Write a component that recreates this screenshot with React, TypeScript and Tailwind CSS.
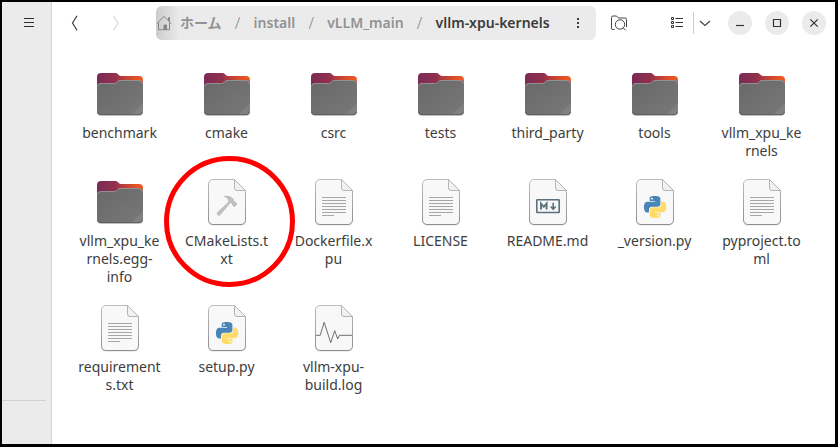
import React from 'react';

type Kind = 'folder' | 'text' | 'cmake' | 'markdown' | 'python' | 'log';

type Entry = {
  kind: Kind;
  // "\n" marks where a long name wraps
  name: string;
  marked?: boolean;
};

const entries: Entry[] = [
  { kind: 'folder', name: 'benchmark' },
  { kind: 'folder', name: 'cmake' },
  { kind: 'folder', name: 'csrc' },
  { kind: 'folder', name: 'tests' },
  { kind: 'folder', name: 'third_party' },
  { kind: 'folder', name: 'tools' },
  { kind: 'folder', name: 'vllm_xpu_ke\nrnels' },
  { kind: 'folder', name: 'vllm_xpu_ke\nrnels.egg-\ninfo' },
  { kind: 'cmake', name: 'CMakeLists.t\nxt', marked: true },
  { kind: 'text', name: 'Dockerfile.x\npu' },
  { kind: 'text', name: 'LICENSE' },
  { kind: 'markdown', name: 'README.md' },
  { kind: 'python', name: '_version.py' },
  { kind: 'text', name: 'pyproject.to\nml' },
  { kind: 'text', name: 'requirement\ns.txt' },
  { kind: 'python', name: 'setup.py' },
  { kind: 'log', name: 'vllm-xpu-\nbuild.log' },
];

const FolderIcon: React.FC = () => (
  <svg viewBox="0 0 48 48" className="h-12 w-12" aria-hidden="true">
    <defs>
      <linearGradient id="folder-back" x1="0" y1="0" x2="1" y2="0">
        <stop offset="0" stopColor="#7a2a56" />
        <stop offset="0.4" stopColor="#93304c" />
        <stop offset="0.55" stopColor="#b53c3c" />
        <stop offset="0.8" stopColor="#dd4f28" />
        <stop offset="1" stopColor="#f05a22" />
      </linearGradient>
      <linearGradient id="folder-front" x1="0" y1="0" x2="1" y2="1">
        <stop offset="0" stopColor="#686868" />
        <stop offset="1" stopColor="#787878" />
      </linearGradient>
    </defs>
    <rect x="1" y="14" width="46" height="32" rx="4" fill="#000" opacity="0.18" />
    <path d="M1 7a4 4 0 0 1 4-4h14.500c1 0 1.800.4 2.500 1.200l1 1c.6.500 1.200.8 2 .8h18a4 4 0 0 1 4 4v25H1z" fill="url(#folder-back)" />
    <path d="M1 17a4 4 0 0 1 4-4h13.500c.9 0 1.500-.3 2-.8l1.400-1.400c.5-.5 1.100-.8 2-.8H43a4 4 0 0 1 4 4v27a4 4 0 0 1-4 4H5a4 4 0 0 1-4-4z" fill="url(#folder-front)" />
    <path d="M1.500 16.500a3.500 3.500 0 0 1 3.500-3h13.500c1 0 1.800-.4 2.400-1l1.200-1.200c.5-.5 1-.8 1.900-.8H43a3.500 3.500 0 0 1 3.500 3" fill="none" stroke="#9a9a9a" strokeWidth="0.800" />
    <path d="M47 33v8a4 4 0 0 1-4 4h-8z" fill="#fff" opacity="0.08" />
    <path d="M1.500 42a3.500 3.500 0 0 0 3.500 2.700h38a3.500 3.500 0 0 0 3.500-2.700" fill="none" stroke="#555" strokeWidth="0.800" />
  </svg>
);

const Page: React.FC<{ children: React.ReactNode }> = ({ children }) => (
  <svg viewBox="0 0 48 48" className="h-12 w-12" aria-hidden="true">
    <defs>
      <linearGradient id="page-edge" x1="0" y1="0" x2="0" y2="1">
        <stop offset="0" stopColor="#bdbdbd" />
        <stop offset="1" stopColor="#8e8e8e" />
      </linearGradient>
    </defs>
    <path d="M5 12v31a4.500 4.500 0 0 0 4.500 4.500h29A4.500 4.500 0 0 0 43 43V15z" fill="#000" opacity="0.120" />
    <path d="M10 1.500h21.500l11 11V42a4.500 4.500 0 0 1-4.500 4.500H10A4.500 4.500 0 0 1 5.500 42V6A4.500 4.500 0 0 1 10 1.500z" fill="#f8f8f8" stroke="url(#page-edge)" />
    <path d="M31.500 1.500V10a2.500 2.500 0 0 0 2.500 2.500h8.500z" fill="#f1f1f1" stroke="#b5b5b5" />
    {children}
  </svg>
);

const TextGlyph: React.FC = () => (
  <path d="M12 19.500h24M12 22.500h24M12 25.500h24M12 28.500h24M12 31.500h24M12 34.500h24M12 37.500h12" stroke="#9c9c9c" strokeWidth="0.900" />
);

const HammerGlyph: React.FC = () => (
  <path
    d="M20.200 18.200c4-.9 7.200-.3 9.300 1.800l1.300 1.500.2 1.800 1.200.3 2.200 2.300-3 3.300-2.300-2.300-.2-1.300-1.700-.3-9.700 11.800c-.8.9-1.800.9-2.600.1l-.7-.8c-.7-.8-.6-1.700.3-2.400l11-10.300c-.5-2.800-2.200-4.500-5.300-5.500z"
    fill="#bfbfbf"
  />
);

const MarkdownGlyph: React.FC = () => (
  <g fill="none" stroke="#5b717c">
    <rect x="12.800" y="21.800" width="22.400" height="12.700" rx="0.500" strokeWidth="1.600" />
    <path d="M17 31.500v-6l2.800 3.300 2.800-3.300v6" strokeWidth="1.900" />
    <path d="M29.200 24.700v6M26.700 28.500l2.500 2.700 2.500-2.700" strokeWidth="1.600" />
  </g>
);

const PythonGlyph: React.FC = () => (
  <g transform="translate(13 18) scale(0.920)">
    <path
      fill="#4b85b6"
      d="M14.25.18l.9.2.73.26.59.3.45.32.34.34.25.34.16.33.1.3.04.26.02.2-.01.13V8.5l-.05.63-.13.55-.21.46-.26.38-.3.31-.33.25-.35.19-.35.14-.33.1-.3.07-.26.04-.21.02H8.77l-.69.05-.59.14-.5.22-.41.27-.33.32-.27.35-.2.36-.15.37-.1.35-.07.32-.04.27-.02.21v3.06H3.17l-.21-.03-.28-.07-.32-.12-.35-.18-.36-.26-.36-.36-.35-.46-.32-.59-.28-.73-.21-.88-.14-1.05-.05-1.23.06-1.22.16-1.04.24-.87.32-.71.36-.57.4-.44.42-.33.42-.24.4-.16.36-.1.32-.05.24-.01h.16l.06.01h8.16v-.83H6.18l-.01-2.75-.02-.37.05-.34.11-.31.17-.28.25-.26.31-.23.38-.2.44-.18.51-.15.58-.12.64-.1.71-.06.77-.04.84-.02 1.27.05zm-6.3 1.98l-.23.33-.08.41.08.41.23.34.33.22.41.09.41-.09.33-.22.23-.34.08-.41-.08-.41-.23-.33-.33-.22-.41-.09-.41.09z"
    />
    <path
      fill="#ffdc68"
      d="M21.1 6.11l.28.06.32.12.35.18.36.27.36.35.35.47.32.59.28.73.21.88.14 1.04.05 1.23-.06 1.23-.16 1.04-.24.86-.32.71-.36.57-.4.45-.42.33-.42.24-.4.16-.36.09-.32.05-.24.02-.16-.01h-8.22v.82h5.84l.01 2.76.02.36-.05.34-.11.31-.17.29-.25.25-.31.24-.38.2-.44.17-.51.15-.58.13-.64.09-.71.07-.77.04-.84.01-1.27-.04-1.07-.14-.9-.2-.73-.25-.59-.3-.45-.33-.34-.34-.25-.34-.16-.33-.1-.3-.04-.25-.02-.2.01-.13v-5.34l.05-.64.13-.54.21-.46.26-.38.3-.32.33-.24.35-.2.35-.14.33-.1.3-.06.26-.04.21-.02.13-.01h5.84l.69-.05.59-.14.5-.21.41-.28.33-.32.27-.35.2-.36.15-.36.1-.35.07-.32.04-.28.02-.21V6.07h2.09l.14.01zm-6.47 14.25l-.23.33-.08.41.08.41.23.33.33.23.41.08.41-.08.33-.23.23-.33.08-.41-.08-.41-.23-.33-.33-.23-.41-.08-.41.08z"
    />
  </g>
);

const LogGlyph: React.FC = () => (
  <path d="M6 31.300h4.200l4-13 6.500 20.400 4-12 3 8.300 1.600-3.700H42" fill="none" stroke="#6e6e6e" />
);

const EntryIcon: React.FC<{ kind: Kind }> = ({ kind }) => {
  if (kind === 'folder') return <FolderIcon />;
  return (
    <Page>
      {kind === 'text' && <TextGlyph />}
      {kind === 'cmake' && <HammerGlyph />}
      {kind === 'markdown' && <MarkdownGlyph />}
      {kind === 'python' && <PythonGlyph />}
      {kind === 'log' && <LogGlyph />}
    </Page>
  );
};

const Sidebar: React.FC = () => (
  <aside className="flex w-[50px] shrink-0 flex-col border-r border-[#d5d5d5] bg-[#ebebeb]">
    <button type="button" aria-label="Menu" className="mt-1 ml-2.5 flex h-[34px] w-[34px] items-center justify-center">
      <svg viewBox="0 0 16 16" className="h-4 w-4" aria-hidden="true">
        <path d="M3 3.500h10M3 7.500h10M3 11.500h10" stroke="#2e2e2e" />
      </svg>
    </button>
    <hr className="mt-auto mr-[5px] mb-[43px] border-[#cfcfcf]" />
  </aside>
);

const Slash: React.FC = () => (
  <span className="w-8 text-center text-base font-light text-[#8a8a8a]">/</span>
);

const PathBar: React.FC = () => (
  <nav
    aria-label="Path"
    className="ml-[23px] flex h-[34px] flex-1 items-center rounded-md bg-[#ebebeb] bg-linear-to-r from-[#cccccc] to-[#ebebeb] to-[24px] text-sm font-semibold text-[#929292]"
  >
    <button type="button" className="flex items-center gap-2">
      <svg viewBox="0 0 16 16" className="h-4 w-4" fill="none" stroke="#858585" aria-hidden="true">
        <path d="M.8 8.700 8 1.300l7.200 7.400M2.500 7.500v7.200h11V7.500M12.500 5.500v-3h1v4" />
        <path d="M8 10h2.500v4.500H8z" fill="#858585" />
      </svg>
      ホーム
    </button>
    <Slash />
    <button type="button">install</button>
    <Slash />
    <button type="button">vLLM_main</button>
    <Slash />
    <button type="button" className="text-[#3b3b3b]">vllm-xpu-kernels</button>
    <button type="button" aria-label="Folder options" className="ml-auto flex h-[34px] w-9 items-center justify-center">
      <svg viewBox="0 0 16 16" className="h-4 w-4" fill="#3b3b3b" aria-hidden="true">
        <path d="M7 3h2v2H7zM7 7h2v2H7zM7 11h2v2H7z" />
      </svg>
    </button>
  </nav>
);

const WindowButton: React.FC<{ label: string; path: string }> = ({ label, path }) => (
  <button type="button" aria-label={label} className="flex h-6 w-6 items-center justify-center rounded-full bg-[#ebebeb]">
    <svg viewBox="0 0 16 16" className="h-4 w-4" fill="none" stroke="#333" strokeWidth="1.200" aria-hidden="true">
      <path d={path} />
    </svg>
  </button>
);

const HeaderBar: React.FC = () => (
  <header className="flex items-center pt-1 pr-[9px] pl-[6px]">
    <button type="button" aria-label="Back" className="flex h-[34px] w-[34px] items-center justify-center">
      <svg viewBox="0 0 16 16" className="h-4 w-4" fill="none" stroke="#3b3b3b" strokeWidth="1.200" aria-hidden="true">
        <path d="M10 .8 5.500 8l4.500 7.200" />
      </svg>
    </button>
    <button type="button" aria-label="Forward" disabled className="ml-[7px] flex h-[34px] w-[34px] items-center justify-center">
      <svg viewBox="0 0 16 16" className="h-4 w-4" fill="none" stroke="#d6d6d6" strokeWidth="1.200" aria-hidden="true">
        <path d="M5.500.8 10 8l-4.500 7.200" />
      </svg>
    </button>
    <PathBar />
    <button type="button" aria-label="Search" className="ml-1.5 flex h-[34px] w-[34px] items-center justify-center">
      <svg viewBox="0 0 18 16" className="h-4 w-[18px]" fill="none" stroke="#444" aria-hidden="true">
        <path d="M4.500 14.500H3A1.500 1.500 0 0 1 1.500 13V2.500A1.500 1.500 0 0 1 3 1h3.500l2 2H15a1.500 1.500 0 0 1 1.500 1.500V12" />
        <circle cx="10" cy="9.500" r="4.700" />
        <path d="m13.200 12.800 2.300 2.500" />
      </svg>
    </button>
    <button type="button" aria-label="List view" className="ml-6 flex h-[34px] w-[33px] items-center justify-center">
      <svg viewBox="0 0 16 16" className="h-4 w-4" fill="none" stroke="#333" aria-hidden="true">
        <path d="M2.500 2.500h2v2h-2zM2.500 6.500h2v2h-2zM2.500 10.500h2v2h-2zM6.500 3.500H14M6.500 7.500H14M6.500 11.500H14" />
      </svg>
    </button>
    <span className="h-[22px] w-px bg-[#cccccc]" />
    <button type="button" aria-label="View options" className="flex h-[34px] w-[22px] items-center justify-center">
      <svg viewBox="0 0 16 16" className="h-4 w-4" fill="none" stroke="#444" strokeWidth="1.200" aria-hidden="true">
        <path d="M3 6l5 4.500L13 6" />
      </svg>
    </button>
    <div className="ml-3 flex gap-[13px]">
      <WindowButton label="Minimize" path="M4 10.500h8" />
      <WindowButton label="Maximize" path="M4.500 4.500h7v7h-7z" />
      <WindowButton label="Close" path="M4.300 4.300l7.400 7.400M11.700 4.300l-7.400 7.400" />
    </div>
  </header>
);

const App: React.FC = () => {
  return (
    <div className="flex min-h-screen border-t-2 border-r-[3px] border-b-[3px] border-l-2 border-black bg-white font-['Noto_Sans','Noto_Sans_CJK_JP',sans-serif] text-[#3d3d3d]">
      <Sidebar />
      <div className="min-w-0 flex-1">
        <HeaderBar />
        <ul className="mt-[30px] grid grid-cols-[repeat(auto-fill,107px)] gap-y-[18px] pr-4 pl-[14px]">
          {entries.map((entry) => (
            <li key={entry.name} className="relative">
              <button type="button" className="flex w-full flex-col items-center gap-1.5">
                <EntryIcon kind={entry.kind} />
                <span className="text-sm leading-[18px] whitespace-pre-line">{entry.name}</span>
              </button>
              {entry.marked && (
                <span className="pointer-events-none absolute -top-[22px] -left-[9px] h-[131px] w-[131px] rounded-full border-[5px] border-[#ff0000]" />
              )}
            </li>
          ))}
        </ul>
      </div>
    </div>
  );
};

export default App;
